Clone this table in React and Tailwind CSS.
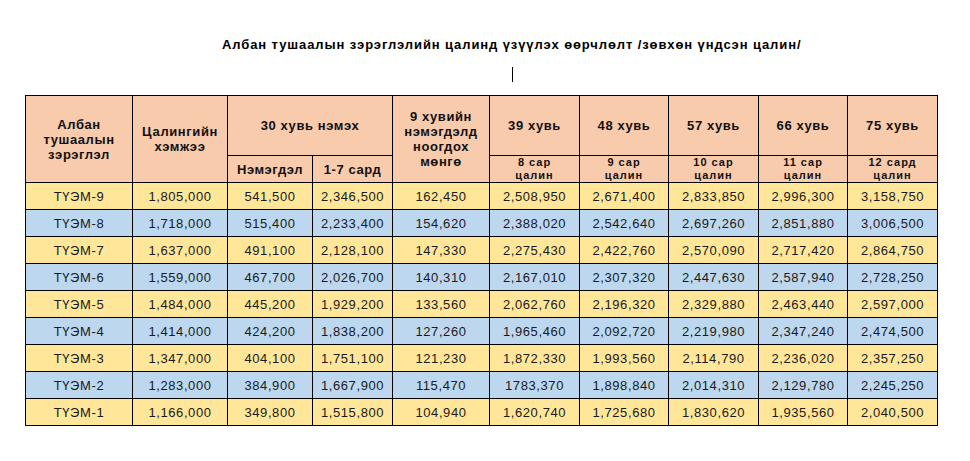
import React from "react";

const ROWS = [
  ["ТҮЭМ-9", "1,805,000", "541,500", "2,346,500", "162,450", "2,508,950", "2,671,400", "2,833,850", "2,996,300", "3,158,750"],
  ["ТҮЭМ-8", "1,718,000", "515,400", "2,233,400", "154,620", "2,388,020", "2,542,640", "2,697,260", "2,851,880", "3,006,500"],
  ["ТҮЭМ-7", "1,637,000", "491,100", "2,128,100", "147,330", "2,275,430", "2,422,760", "2,570,090", "2,717,420", "2,864,750"],
  ["ТҮЭМ-6", "1,559,000", "467,700", "2,026,700", "140,310", "2,167,010", "2,307,320", "2,447,630", "2,587,940", "2,728,250"],
  ["ТҮЭМ-5", "1,484,000", "445,200", "1,929,200", "133,560", "2,062,760", "2,196,320", "2,329,880", "2,463,440", "2,597,000"],
  ["ТҮЭМ-4", "1,414,000", "424,200", "1,838,200", "127,260", "1,965,460", "2,092,720", "2,219,980", "2,347,240", "2,474,500"],
  ["ТҮЭМ-3", "1,347,000", "404,100", "1,751,100", "121,230", "1,872,330", "1,993,560", "2,114,790", "2,236,020", "2,357,250"],
  ["ТҮЭМ-2", "1,283,000", "384,900", "1,667,900", "115,470", "1783,370", "1,898,840", "2,014,310", "2,129,780", "2,245,250"],
  ["ТҮЭМ-1", "1,166,000", "349,800", "1,515,800", "104,940", "1,620,740", "1,725,680", "1,830,620", "1,935,560", "2,040,500"],
];

const WIDTHS = [107, 95, 85, 80, 97, 90, 89, 90, 89, 90];
const PERCENTS = ["39 хувь", "48 хувь", "57 хувь", "66 хувь", "75 хувь"];
const MONTHS = [
  ["8 сар", "цалин"],
  ["9 сар", "цалин"],
  ["10 сар", "цалин"],
  ["11 сар", "цалин"],
  ["12 сард", "цалин"],
];

const cell = "border border-black text-center align-middle p-0";
const th = `${cell} bg-[#f8cbad] font-bold text-[13px] leading-[15px] tracking-[0.6px] text-[#111]`;
const thSmall = `${cell} bg-[#f8cbad] font-bold text-[11px] leading-[13px] tracking-[1px] text-[#111]`;
const td = `${cell} text-[13px] leading-[15px] tracking-[0.6px] text-[#1a1a1a]`;

export default function App() {
  return (
    <div className="w-[970px] h-[461px] bg-white font-['Liberation_Sans',Arial,sans-serif] flex flex-col">
      <h1 className="mt-[36px] pl-[222px] text-[13px] leading-[18px] tracking-[0.9px] font-bold text-black whitespace-nowrap">
        Албан тушаалын зэрэглэлийн цалинд үзүүлэх өөрчлөлт /зөвхөн үндсэн цалин/
      </h1>
      <div className="mt-[13px] ml-[512px] w-px h-[15px] bg-black" />
      <table className="mt-[13px] ml-[25px] w-[912px] table-fixed border-collapse">
        <colgroup>
          {WIDTHS.map((w, i) => (
            <col key={i} style={{ width: w }} />
          ))}
        </colgroup>
        <thead>
          <tr className="h-[60px]">
            <th rowSpan={2} className={th}>
              Албан<br />тушаалын<br />зэрэглэл
            </th>
            <th rowSpan={2} className={th}>
              Цалингийн<br />хэмжээ
            </th>
            <th colSpan={2} className={th}>30 хувь нэмэх</th>
            <th rowSpan={2} className={th}>
              9 хувийн<br />нэмэгдэлд<br />ноогдох<br />мөнгө
            </th>
            {PERCENTS.map((p) => (
              <th key={p} className={th}>{p}</th>
            ))}
          </tr>
          <tr className="h-[26px]">
            <th className={th}>Нэмэгдэл</th>
            <th className={th}>1-7 сард</th>
            {MONTHS.map(([a, b]) => (
              <th key={a} className={thSmall}>
                {a}<br />{b}
              </th>
            ))}
          </tr>
        </thead>
        <tbody>
          {ROWS.map((row, i) => (
            <tr key={row[0]} className={`h-[27px] ${i % 2 === 0 ? "bg-[#ffe699]" : "bg-[#bdd7ee]"}`}>
              {row.map((v, j) => (
                <td key={j} className={td}>{v}</td>
              ))}
            </tr>
          ))}
        </tbody>
      </table>
    </div>
  );
}
